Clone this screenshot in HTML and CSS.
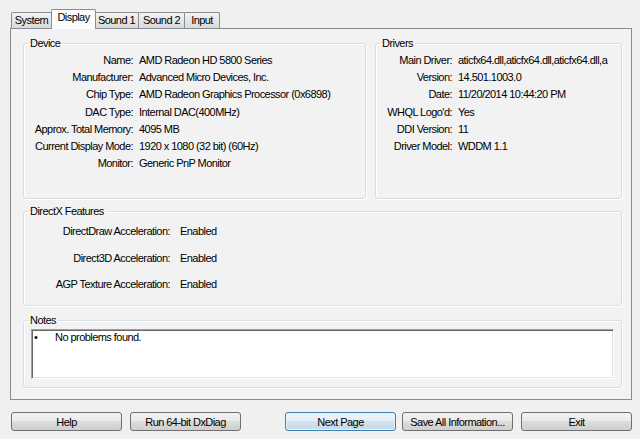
FILE: index.html
```html
<!DOCTYPE html>
<html>
<head>
<meta charset="utf-8">
<link rel="stylesheet" href="styles.css">
</head>
<body>
<div class="window">
  <div class="tabs">
    <div class="tab tab-system">System</div>
    <div class="tab tab-display active">Display</div>
    <div class="tab tab-sound1">Sound 1</div>
    <div class="tab tab-sound2">Sound 2</div>
    <div class="tab tab-input">Input</div>
  </div>
  <div class="panel">
    <div class="top-row">
      <fieldset class="group device">
        <legend>Device</legend>
        <dl class="props device-props">
          <dt>Name:</dt><dd>AMD Radeon HD 5800 Series</dd>
          <dt>Manufacturer:</dt><dd>Advanced Micro Devices, Inc.</dd>
          <dt>Chip Type:</dt><dd>AMD Radeon Graphics Processor (0x6898)</dd>
          <dt>DAC Type:</dt><dd>Internal DAC(400MHz)</dd>
          <dt>Approx. Total Memory:</dt><dd>4095 MB</dd>
          <dt>Current Display Mode:</dt><dd>1920 x 1080 (32 bit) (60Hz)</dd>
          <dt>Monitor:</dt><dd>Generic PnP Monitor</dd>
        </dl>
      </fieldset>
      <fieldset class="group drivers">
        <legend>Drivers</legend>
        <dl class="props driver-props">
          <dt>Main Driver:</dt><dd>aticfx64.dll,aticfx64.dll,aticfx64.dll,a</dd>
          <dt>Version:</dt><dd>14.501.1003.0</dd>
          <dt>Date:</dt><dd>11/20/2014 10:44:20 PM</dd>
          <dt>WHQL Logo'd:</dt><dd>Yes</dd>
          <dt>DDI Version:</dt><dd>11</dd>
          <dt>Driver Model:</dt><dd>WDDM 1.1</dd>
        </dl>
      </fieldset>
    </div>
    <fieldset class="group dx">
      <legend>DirectX Features</legend>
      <dl class="props dx-props">
        <dt>DirectDraw Acceleration:</dt><dd>Enabled</dd>
        <dt>Direct3D Acceleration:</dt><dd>Enabled</dd>
        <dt>AGP Texture Acceleration:</dt><dd>Enabled</dd>
      </dl>
    </fieldset>
    <fieldset class="group notes">
      <legend>Notes</legend>
      <div class="notes-box">
        <div class="note"><span class="bullet">•</span><span>No problems found.</span></div>
      </div>
    </fieldset>
  </div>
  <div class="buttons">
    <button class="btn">Help</button>
    <button class="btn">Run 64-bit DxDiag</button>
    <button class="btn btn-default btn-next">Next Page</button>
    <button class="btn btn-save">Save All Information...</button>
    <button class="btn">Exit</button>
  </div>
</div>
</body>
</html>
```

FILE: styles.css
```css
* { box-sizing: border-box; }

html, body {
  margin: 0;
  padding: 0;
}

body {
  background: #f0f0f0;
  width: 640px;
  height: 439px;
  overflow: hidden;
  font-family: "Liberation Sans", Arial, sans-serif;
  font-size: 11px;
  letter-spacing: -0.55px;
  color: #000;
}

.tabs {
  display: flex;
  align-items: flex-end;
  height: 28px;
  padding-left: 11px;
}

.tab {
  height: 16px;
  border: 1px solid #898c95;
  border-bottom: none;
  border-radius: 2px 2px 0 0;
  background: linear-gradient(#f3f3f3, #e6e6e6 50%, #dadada);
  line-height: 15px;
  text-align: center;
  margin-left: -1px;
}

.tab:first-child { margin-left: 0; }

.tab-system { width: 41px; }
.tab-sound1 { width: 45px; }
.tab-sound2 { width: 47px; }
.tab-input { width: 36px; }

.tab.active {
  height: 20px;
  background: #fcfcfc;
  margin: 0 -1px -1px -1px;
  position: relative;
  z-index: 2;
  width: 45px;
}

.panel {
  margin-left: 10px;
  width: 622px;
  height: 372px;
  border: 1px solid #898c95;
  background: #f2f2f2;
  padding: 8px 9px 0 12px;
  position: relative;
  z-index: 1;
}

.top-row {
  display: flex;
  gap: 9px;
  height: 162px;
}

.group {
  margin: 0;
  padding: 0;
  min-width: 0;
  border: 1px solid #d5dfe5;
  border-radius: 3px;
  box-shadow: inset 1px 1px 0 #fff, 1px 1px 0 #fff;
}

.group legend {
  margin-left: 4px;
  padding: 0 2px;
  line-height: 13px;
}

.device { width: 343px; }
.drivers { width: 247px; }

.props {
  margin: 0;
  display: grid;
  line-height: 17.2px;
  white-space: nowrap;
}

.props dt {
  text-align: right;
}

.props dd {
  margin: 0;
  overflow: hidden;
}

.device-props {
  padding-top: 2px;
  grid-template-columns: 109px 1fr;
  column-gap: 6px;
}

.driver-props {
  padding-top: 2px;
  grid-template-columns: 76px 1fr;
  column-gap: 6px;
}

.dx {
  margin-top: 6px;
  height: 101px;
}

.dx-props {
  line-height: 26.5px;
  grid-template-columns: 146px 1fr;
  column-gap: 10px;
}

.notes {
  margin-top: 8px;
  height: 74px;
}

.notes-box {
  margin: 2px 0 0 7px;
  width: 583px;
  height: 50px;
  background: #fff;
  border-top: 1px solid #a0a0a0;
  border-left: 1px solid #a0a0a0;
  border-right: 1px solid #fff;
  border-bottom: 1px solid #fff;
  box-shadow: inset 1px 1px 0 #696969, inset -1px -1px 0 #e3e3e3;
  padding: 1px 2px;
}

.note {
  display: flex;
  line-height: 13px;
}

.bullet {
  width: 21px;
}

.buttons {
  display: flex;
  gap: 8px;
  padding-left: 11px;
  margin-top: 12px;
}

.btn {
  width: 111px;
  height: 19px;
  padding: 0;
  border: 1px solid #707070;
  border-radius: 3px;
  background: linear-gradient(#f2f2f2, #ebebeb 45%, #dddddd 50%, #cfcfcf);
  font: inherit;
  letter-spacing: inherit;
  color: #000;
  text-align: center;
  line-height: 16px;
}

.btn-default {
  border-color: #3c7fb1;
  box-shadow: inset 0 0 0 1px #e8f4fb;
  background: linear-gradient(#eef5fa, #e4eef5 45%, #d3e2ee 50%, #c6d8e6);
}

.btn-next { margin-left: 36px; }
.btn-save { margin-left: -2px; }
```
